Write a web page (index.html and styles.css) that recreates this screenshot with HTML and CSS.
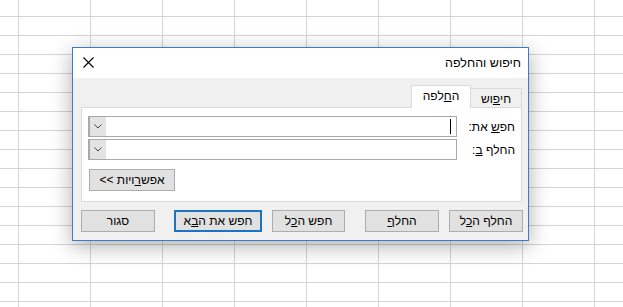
FILE: index.html
```html
<!DOCTYPE html>
<html lang="he">
<head>
<meta charset="utf-8">
<title>חיפוש והחלפה</title>
<link rel="stylesheet" href="styles.css">
</head>
<body>
<div class="sheet">
  <div class="dialog" dir="rtl">
    <div class="titlebar">
      <span class="title">חיפוש והחלפה</span>
      <span class="close"><svg width="11" height="11" viewBox="0 0 11 11"><path d="M0.5 0.5 L10.5 10.5 M10.5 0.5 L0.5 10.5" stroke="#000" stroke-width="1.1" fill="none"/></svg></span>
    </div>
    <div class="body">
      <div class="tabs">
        <div class="tab">חי<u>פ</u>וש</div>
        <div class="tab active">ה<u>ח</u>לפה</div>
      </div>
      <div class="panel">
        <div class="row">
          <span class="lbl">חפ<u>ש</u> את:</span>
          <div class="combo">
            <div class="field"><span class="caret"></span></div>
            <div class="drop"><svg width="8" height="5" viewBox="0 0 8 5"><path d="M0.5 0.5 L4 4 L7.5 0.5" stroke="#444" stroke-width="1" fill="none"/></svg></div>
          </div>
        </div>
        <div class="row second">
          <span class="lbl">החלף <u>ב</u>:</span>
          <div class="combo">
            <div class="field"></div>
            <div class="drop"><svg width="8" height="5" viewBox="0 0 8 5"><path d="M0.5 0.5 L4 4 L7.5 0.5" stroke="#444" stroke-width="1" fill="none"/></svg></div>
          </div>
        </div>
        <button class="btn opts">אפש<u>ר</u>ויות &gt;&gt;</button>
      </div>
      <div class="actions">
        <button class="btn w74">החלף ה<u>כ</u>ל</button>
        <button class="btn w74 gap10">החל<u>ף</u></button>
        <button class="btn w73 gap20">חפש ה<u>כ</u>ל</button>
        <button class="btn default gap10">חפש את ה<u>ב</u>א</button>
        <button class="btn w74 gap19">סגור</button>
      </div>
    </div>
  </div>
</div>
</body>
</html>
```

FILE: styles.css
```css
html, body {
  margin: 0;
  padding: 0;
  background: #ffffff;
}

.sheet {
  position: relative;
  width: 623px;
  height: 307px;
  overflow: hidden;
  background-color: #ffffff;
  background-image:
    linear-gradient(to right, #d4d4d4 1px, transparent 1px),
    linear-gradient(to bottom, #d4d4d4 1px, transparent 1px);
  background-size: 72px 100%, 100% 19px;
  background-position: 18px 0, 0 16px;
  font-family: "Liberation Sans", "DejaVu Sans", sans-serif;
  font-size: 12px;
  color: #000;
}

.dialog {
  position: absolute;
  left: 72px;
  top: 47px;
  width: 457px;
  height: 194px;
  box-sizing: border-box;
  border: 1px solid #3a7ec0;
  background: #f0f0f0;
  box-shadow: 0 5px 20px rgba(0, 0, 0, 0.32);
  display: flex;
  flex-direction: column;
}

.titlebar {
  height: 30px;
  background: #ffffff;
  display: flex;
  align-items: center;
  justify-content: space-between;
  padding: 0 7px 0 10px;
}

.title {
  font-size: 12.5px;
  line-height: 14px;
}

.close {
  display: flex;
  width: 11px;
  height: 11px;
  margin-top: -1px;
}

.body {
  flex: 1;
  padding: 7px 6px 0 8px;
  display: flex;
  flex-direction: column;
}

.tabs {
  display: flex;
  align-items: flex-end;
  height: 23px;
  margin-bottom: -1px;
}

.tab {
  box-sizing: border-box;
  height: 19px;
  margin-bottom: 1px;
  width: 52px;
  border: 1px solid #d9d9d9;
  border-bottom: none;
  background: #f0f0f0;
  display: flex;
  align-items: center;
  justify-content: center;
  padding-top: 2px;
}

.tab.active {
  position: relative;
  z-index: 1;
  height: 23px;
  margin-bottom: 0;
  width: 60px;
  margin-inline-start: -1px;
  background: #ffffff;
  padding-top: 0;
  padding-bottom: 2px;
}

.panel {
  box-sizing: border-box;
  height: 95px;
  background: #ffffff;
  border: 1px solid #d9d9d9;
  padding: 8px 6px 0 6px;
  display: flex;
  flex-direction: column;
}

.row {
  display: flex;
  height: 21px;
  align-items: center;
}

.row.second {
  margin-top: 2px;
}

.lbl {
  width: 58px;
  flex: none;
  text-align: right;
}

.combo {
  flex: 1;
  height: 21px;
  box-sizing: border-box;
  border: 1px solid #a9a9a9;
  display: flex;
  background: #ffffff;
}

.field {
  flex: 1;
  display: flex;
  align-items: center;
  padding-right: 5px;
}

.caret {
  width: 1px;
  height: 15px;
  background: #000;
}

.drop {
  width: 16px;
  flex: none;
  background: #e3e3e3;
  border-left: 1px solid #a9a9a9;
  display: flex;
  align-items: center;
  justify-content: center;
}

.btn {
  font-family: "Liberation Sans", "DejaVu Sans", sans-serif;
  font-size: 12px;
  color: #000;
  height: 22px;
  box-sizing: border-box;
  background: #e1e1e1;
  border: 1px solid #adadad;
  padding: 0;
  margin: 0;
  display: flex;
  align-items: center;
  justify-content: center;
  flex: none;
}

.opts {
  width: 86px;
  align-self: flex-end;
  margin-top: 9px;
  margin-left: 1px;
}

.actions {
  display: flex;
  margin-top: 8px;
  margin-right: -1px;
}

.w74 { width: 74px; }
.w73 { width: 73px; }

.default {
  width: 88px;
  border: 2px solid #1c74c0;
}

.gap10 { margin-right: 10px; }
.gap19 { margin-right: 19px; }
.gap20 { margin-right: 20px; }
```
